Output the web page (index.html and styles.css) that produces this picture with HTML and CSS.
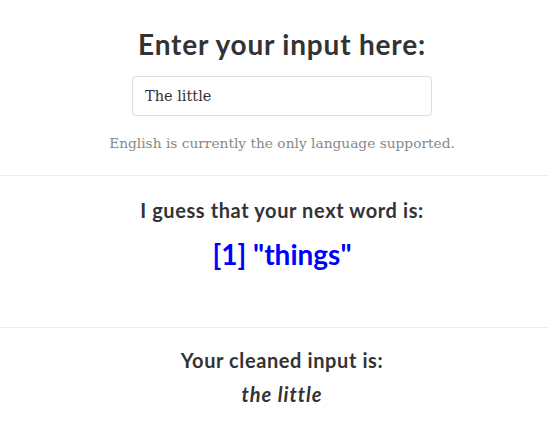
FILE: index.html
```html
<!DOCTYPE html>
<html>
<head>
<meta charset="utf-8">
<link rel="stylesheet" href="styles.css">
</head>
<body>
<div class="page">
  <section class="input-section">
    <h2 class="title">Enter your input here:</h2>
    <div class="field">
      <input class="text-input" type="text" value="The little">
    </div>
    <p class="help">English is currently the only language supported.</p>
  </section>
  <hr class="rule rule-first">
  <section class="guess-section">
    <h4 class="subtitle">I guess that your next word is:</h4>
    <h3 class="guess">[1] "things"</h3>
  </section>
  <hr class="rule">
  <section class="clean-section">
    <h4 class="subtitle">Your cleaned input is:</h4>
    <div class="cleaned">the little</div>
  </section>
</div>
</body>
</html>
```
FILE: styles.css
```css
html, body {
  margin: 0;
  padding: 0;
  background: #fff;
}
body {
  font-family: "DejaVu Serif", serif;
  color: #333;
}
.page {
  display: flex;
  flex-direction: column;
  align-items: stretch;
}
.input-section,
.guess-section,
.clean-section {
  display: flex;
  flex-direction: column;
  align-items: center;
  padding-left: 16px;
}
.input-section {
  padding-top: 27px;
}
.title {
  font-family: "Lato", sans-serif;
  font-weight: 700;
  font-size: 28px;
  letter-spacing: 0.8px;
  line-height: 34px;
  margin: 0;
  color: #333;
}
.field {
  margin-top: 15px;
}
.text-input {
  box-sizing: border-box;
  width: 300px;
  height: 40px;
  border: 1px solid #ddd;
  border-radius: 4px;
  padding: 0 12px;
  font-family: "DejaVu Serif", serif;
  font-size: 14.5px;
  color: #333;
  outline: none;
}
.help {
  margin: 16px 0 0;
  font-size: 13.75px;
  line-height: 22px;
  color: #888;
}
.rule {
  border: 0;
  border-top: 1px solid #eee;
  margin: 0;
}
.rule-first {
  margin-top: 21px;
}
.guess-section {
  padding-top: 21px;
  height: 151px;
  box-sizing: border-box;
}
.subtitle {
  font-family: "Lato", sans-serif;
  font-weight: 700;
  font-size: 20px;
  letter-spacing: 0.6px;
  line-height: 26px;
  margin: 0;
  color: #333;
}
.guess {
  font-family: "Lato", sans-serif;
  font-weight: 700;
  font-size: 28px;
  line-height: 34px;
  margin: 14px 0 0;
  color: #0000ff;
}
.clean-section {
  padding-top: 19px;
}
.cleaned {
  font-family: "Lato", sans-serif;
  font-weight: 700;
  font-style: italic;
  font-size: 20px;
  letter-spacing: 1px;
  line-height: 28px;
  margin-top: 7px;
  color: #333;
}
```
